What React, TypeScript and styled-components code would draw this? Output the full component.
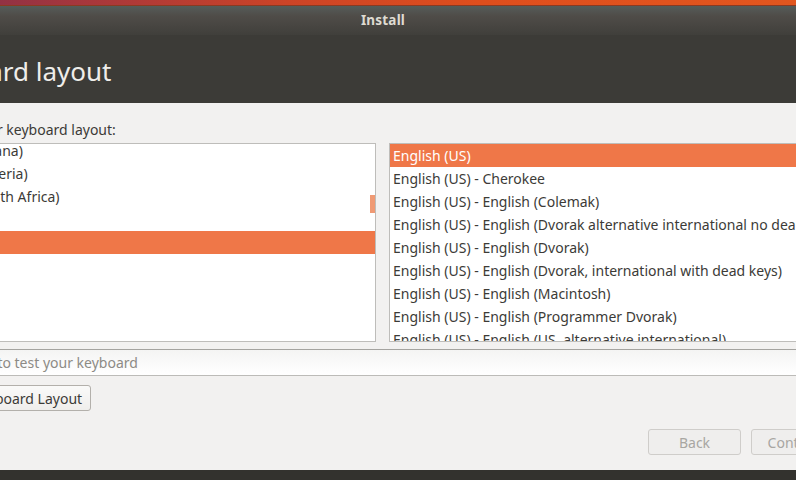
import styled, { createGlobalStyle } from 'styled-components';

const GlobalStyle = createGlobalStyle`
  html, body {
    margin: 0;
    padding: 0;
    overflow: hidden;
    background: #33322e;
  }
  * {
    box-sizing: border-box;
  }
`;

const FONT = `"Noto Sans", "Open Sans", "DejaVu Sans", sans-serif`;

// 보이는 화면
const Screen = styled.div`
  width: 796px;
  height: 480px;
  overflow: hidden;
  position: relative;
  font-family: ${FONT};
`;

// 설치 창 (왼쪽/오른쪽이 화면 밖으로 나감)
const Window = styled.div`
  margin-left: -96px;
  width: 958px;
  height: 480px;
  display: flex;
  flex-direction: column;
`;

const PanelStrip = styled.div`
  height: 6px;
  flex-shrink: 0;
  background: linear-gradient(90deg, #7b2d4c 0%, #a5363d 18%, #cc4427 40%, #de4e1d 60%, #e2581f 100%);
  border-bottom: 1px solid #8a3a22;
`;

const TitleBar = styled.div`
  height: 29px;
  flex-shrink: 0;
  display: flex;
  align-items: center;
  justify-content: center;
  background: linear-gradient(180deg, #555c59 0%, #4f4c48 35%, #403f3b 100%);
  color: #dfdbd2;
  font-weight: 700;
  font-size: 13.5px;
  letter-spacing: 0.2px;
  padding-bottom: 2px;
`;

const Header = styled.div`
  height: 68px;
  flex-shrink: 0;
  background: #3c3b37;
  display: flex;
  align-items: center;
  padding: 4px 18px 0 9px;
`;

const PageTitle = styled.h1`
  margin: 0;
  font-weight: 400;
  font-size: 26px;
  color: #efedea;
`;

const Body = styled.div`
  flex: 1;
  background: #f2f1f0;
  display: flex;
  flex-direction: column;
  padding: 14px 18px 0 12px;
  color: #3c3b37;
  font-size: 14px;
`;

const Label = styled.div`
  height: 26px;
  padding-left: 4px;
  line-height: 26px;
`;

const Lists = styled.div`
  display: grid;
  grid-template-columns: 460px 1fr;
  column-gap: 13px;
  height: 199px;
`;

const ListBox = styled.div`
  position: relative;
  background: #ffffff;
  border: 1px solid #bebdba;
  overflow: hidden;
`;

const ListInner = styled.div<{ $offset: number }>`
  margin-top: ${(p) => -p.$offset}px;
  display: flex;
  flex-direction: column;
`;

const Row = styled.div<{ $selected?: boolean }>`
  height: 23px;
  line-height: 23px;
  padding-left: 3px;
  white-space: nowrap;
  background: ${(p) => (p.$selected ? '#ef7748' : 'transparent')};
  color: ${(p) => (p.$selected ? '#ffffff' : '#3c3b37')};
`;

const ScrollMark = styled.div`
  position: absolute;
  right: 0;
  top: 51px;
  width: 5px;
  height: 18px;
  background: #f09a74;
`;

const Entry = styled.div`
  margin-top: 7px;
  height: 27px;
  border-top: 1px solid #a4a39f;
  border-bottom: 1px solid #bcbbb8;
  background: linear-gradient(180deg, #f4f4f3 0%, #fbfbfb 60%, #ffffff 100%);
  color: #8d8b86;
  display: flex;
  align-items: center;
  padding-left: 13px;
`;

const ButtonRow = styled.div`
  display: flex;
  margin-top: 9px;
`;

const Button = styled.div<{ $disabled?: boolean; $width?: number }>`
  height: 26px;
  padding: 0 8px;
  min-width: ${(p) => (p.$width ? `${p.$width}px` : 'auto')};
  display: flex;
  align-items: center;
  justify-content: center;
  border: 1px solid ${(p) => (p.$disabled ? '#cfcdca' : '#b3b0ab')};
  border-radius: 3px;
  background: ${(p) =>
    p.$disabled ? '#efeeed' : 'linear-gradient(180deg, #fafaf9 0%, #efeeec 100%)'};
  color: ${(p) => (p.$disabled ? '#a8a6a2' : '#3c3b37')};
  white-space: nowrap;
`;

const Footer = styled.div`
  margin-top: auto;
  height: 41px;
  display: flex;
  justify-content: flex-end;
  gap: 10px;
`;

const BottomBar = styled.div`
  height: 10px;
  flex-shrink: 0;
  background: #33322e;
`;

const languages = [
  'English (Cameroon)',
  'English (Ghana)',
  'English (Nigeria)',
  'English (South Africa)',
  'English (UK)',
  'English (US)',
  'Esperanto',
  'Estonian',
  'Faroese',
  'Filipino',
  'Finnish',
  'French',
];

const layouts = [
  'English (US)',
  'English (US) - Cherokee',
  'English (US) - English (Colemak)',
  'English (US) - English (Dvorak alternative international no dead keys)',
  'English (US) - English (Dvorak)',
  'English (US) - English (Dvorak, international with dead keys)',
  'English (US) - English (Macintosh)',
  'English (US) - English (Programmer Dvorak)',
  'English (US) - English (US, alternative international)',
  'English (US) - English (US, international with dead keys)',
];

const App = () => {
  return (
    <>
      <GlobalStyle />
      <Screen>
        <Window>
          <PanelStrip />
          <TitleBar>Install</TitleBar>
          <Header>
            <PageTitle>Keyboard layout</PageTitle>
          </Header>
          <Body>
            <Label>Choose your keyboard layout:</Label>
            <Lists>
              <ListBox>
                <ListInner $offset={28}>
                  {languages.map((item, index) => (
                    <Row key={index} $selected={item === 'English (US)'}>
                      {item}
                    </Row>
                  ))}
                </ListInner>
                <ScrollMark />
              </ListBox>
              <ListBox>
                <ListInner $offset={0}>
                  {layouts.map((item, index) => (
                    <Row key={index} $selected={index === 0}>
                      {item}
                    </Row>
                  ))}
                </ListInner>
              </ListBox>
            </Lists>
            <Entry>Type here to test your keyboard</Entry>
            <ButtonRow>
              <Button>Detect Keyboard Layout</Button>
            </ButtonRow>
            <Footer>
              <Button $disabled $width={93}>Back</Button>
              <Button $disabled $width={93}>Continue</Button>
            </Footer>
          </Body>
          <BottomBar />
        </Window>
      </Screen>
    </>
  );
};

export default App;
